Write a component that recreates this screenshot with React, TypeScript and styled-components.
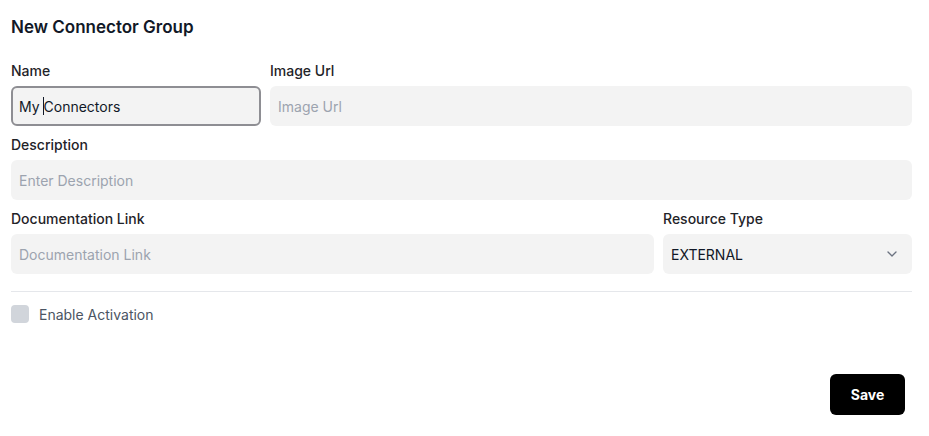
import React from 'react';
import styled, { createGlobalStyle } from 'styled-components';

const GlobalStyle = createGlobalStyle`
  * { box-sizing: border-box; }
  body {
    margin: 0;
    background: #ffffff;
    font-family: Inter, "Noto Sans", sans-serif;
    color: #111827;
  }
`;

const Page = styled.div`
  padding: 16px 17px 0 11px;
  display: flex;
  flex-direction: column;
`;

const Title = styled.h2`
  margin: 0 0 23px;
  font-size: 17px;
  font-weight: 600;
  line-height: 22px;
  color: #111827;
`;

const Row = styled.div<{ $cols: string }>`
  display: grid;
  grid-template-columns: ${p => p.$cols};
  gap: 9px;
  margin-bottom: 9px;
`;

const Field = styled.div`
  display: flex;
  flex-direction: column;
  gap: 5px;
  position: relative;
`;

const Label = styled.label`
  font-size: 14px;
  font-weight: 500;
  line-height: 20px;
  color: #1f2328;
`;

const Input = styled.input<{ $focused?: boolean }>`
  height: 40px;
  width: 100%;
  border: ${p => (p.$focused ? '2px solid #8e8e93' : '2px solid transparent')};
  border-radius: 6px;
  background: #f3f3f3;
  padding: 0 6px;
  font-family: inherit;
  font-size: 14px;
  color: #111827;
  outline: none;

  &::placeholder {
    color: #9ca3af;
  }
`;

const Caret = styled.span`
  position: absolute;
  left: 32px;
  top: 36px;
  width: 1px;
  height: 18px;
  background: #111827;
`;

const SelectBox = styled.div`
  height: 40px;
  border-radius: 6px;
  background: #f3f3f3;
  padding: 0 12px 0 8px;
  display: flex;
  align-items: center;
  justify-content: space-between;
  font-size: 14px;
  color: #111827;
`;

const Divider = styled.hr`
  border: none;
  border-top: 1px solid #e5e7eb;
  margin: 8px 0 13px;
`;

const CheckRow = styled.div`
  display: flex;
  align-items: center;
  gap: 10px;
`;

const Checkbox = styled.span`
  width: 18px;
  height: 18px;
  border-radius: 4px;
  background: #d1d5db;
`;

const CheckLabel = styled.span`
  font-size: 14px;
  color: #4b5563;
`;

const Footer = styled.div`
  display: flex;
  justify-content: flex-end;
  padding-right: 7px;
  margin-top: 51px;
`;

const SaveButton = styled.button`
  width: 75px;
  height: 41px;
  border: none;
  border-radius: 6px;
  background: #000000;
  color: #ffffff;
  font-family: inherit;
  font-size: 14px;
  font-weight: 700;
`;

export default function App() {
  return (
    <>
      <GlobalStyle />
      <Page>
        <Title>New Connector Group</Title>

        <Row $cols="250px 1fr">
          <Field>
            <Label>Name</Label>
            <Input $focused defaultValue="My Connectors" />
            <Caret />
          </Field>
          <Field>
            <Label>Image Url</Label>
            <Input placeholder="Image Url" />
          </Field>
        </Row>

        <Row $cols="1fr">
          <Field>
            <Label>Description</Label>
            <Input placeholder="Enter Description" />
          </Field>
        </Row>

        <Row $cols="1fr 249px">
          <Field>
            <Label>Documentation Link</Label>
            <Input placeholder="Documentation Link" />
          </Field>
          <Field>
            <Label>Resource Type</Label>
            <SelectBox>
              <span>EXTERNAL</span>
              <svg width="16" height="16" viewBox="0 0 24 24" fill="none" stroke="#6b7280" strokeWidth="2" strokeLinecap="round" strokeLinejoin="round">
                <path d="m6 9 6 6 6-6" />
              </svg>
            </SelectBox>
          </Field>
        </Row>

        <Divider />

        <CheckRow>
          <Checkbox />
          <CheckLabel>Enable Activation</CheckLabel>
        </CheckRow>

        <Footer>
          <SaveButton>Save</SaveButton>
        </Footer>
      </Page>
    </>
  );
}
